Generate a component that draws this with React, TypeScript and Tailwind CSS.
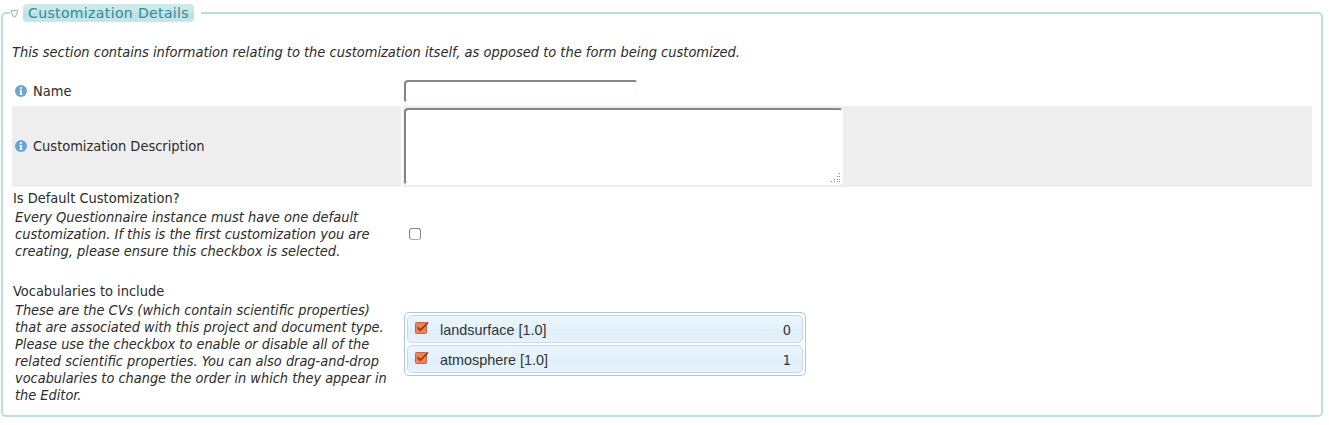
import React from "react";

function InfoIcon() {
  return (
    <svg width="12" height="12" viewBox="0 0 12 12" className="shrink-0">
      <circle cx="6" cy="6" r="6" fill="#6aa5d6" />
      <path d="M5 2.2h2v1.8H5zM4.6 5H7v3.7h.6v1H4.4v-1H5V6h-.4z" fill="#fff" />
    </svg>
  );
}

function CheckedIcon() {
  return (
    <svg width="14" height="13" viewBox="0 0 14 13" className="shrink-0">
      <rect x="0.5" y="1.5" width="11" height="11" rx="1" fill="#f58057" stroke="#c9623f" />
      <path d="M2.6 6.3L5.4 9.3L13 1.4" fill="none" stroke="#7a4030" strokeWidth="1.7" />
    </svg>
  );
}

function Vocabulary({ name, order }: { name: string; order: number }) {
  return (
    <li className="flex h-7 items-center rounded-[5px] border border-[#c5dbec] bg-[linear-gradient(to_bottom,#e9f4fc_0%,#e6f3fc_50%,#dbeefa_50%,#e6f3fc_100%)] pr-[11px] pl-[7px] text-[#333]">
      <span className="-mt-[3px] flex">
        <CheckedIcon />
      </span>
      <span className="ml-[11px] pt-0.5 font-['Liberation_Sans',sans-serif] text-[14.4px] leading-4">{name}</span>
      <span className="ml-auto pt-[2px] text-[14.4px]">{order}</span>
    </li>
  );
}

export default function App() {
  return (
    <div className="h-[425px] bg-white pt-1 pl-px">
      <fieldset className="h-[413px] w-[1322px] rounded-[5px] border-2 border-[#b8e0e3] pl-[9px]">
        <legend className="-ml-[2px] flex h-[18px] items-center pr-[7px]">
          <svg width="9" height="8" viewBox="0 0 9 8" className="mt-[2px] mr-[4px]">
            <path d="M0.8 0.7H8L5.4 6.7H3.4Z" fill="#fff" stroke="#aaa" strokeWidth="1" />
          </svg>
          <span className="flex h-[18px] w-[171px] items-center rounded-[4px] bg-[linear-gradient(to_bottom,#cfebec_0%,#c5e6e9_50%,#b7dfe3_51%,#c8e8ea_100%)] px-[5px] font-['DejaVu_Sans',sans-serif] text-[14px] tracking-[0.37px] whitespace-nowrap text-[#338c96]">
            Customization Details
          </span>
        </legend>
        <div className="font-['DejaVu_Sans_Condensed','DejaVu_Sans',sans-serif] text-[14.48px] leading-[17px] [font-stretch:condensed] whitespace-nowrap text-[#2b2b2b]">
          <p className="mt-[22px] italic">
            This section contains information relating to the customization itself, as opposed to the form being customized.
          </p>
          <div className="mt-[17px] grid w-[1300px] grid-cols-[389px_909px] grid-rows-[26px_81px_91px_122px] gap-x-[2px] gap-y-[2px]">
            <div className="flex items-center gap-[6px] pl-[3px]">
              <InfoIcon />
              <label htmlFor="name">Name</label>
            </div>
            <div className="pt-[2px] pl-px">
              <input
                id="name"
                className="block h-[23px] w-[234px] rounded-[4px] border-2 border-t-[#868686] border-r-[#fdfdfd] border-b-[#fdfdfd] border-l-[#868686] bg-white outline-none"
              />
            </div>

            <div className="flex items-center gap-[6px] bg-[#eee] pb-px pl-[3px]">
              <InfoIcon />
              <label htmlFor="description">Customization Description</label>
            </div>
            <div className="bg-[#eee] pt-[2px] pl-px">
              <div className="relative w-[439px]">
                <textarea
                  id="description"
                  className="block h-[77px] w-[439px] resize-none rounded-[4px] border-2 border-t-[#868686] border-r-[#fdfdfd] border-b-[#fdfdfd] border-l-[#868686] bg-white outline-none"
                />
                <svg width="10" height="10" viewBox="0 0 10 10" className="absolute right-[2px] bottom-[2px]" fill="#888" shapeRendering="crispEdges">
                  <path d="M8 0h1v1H8zM8 3h1v1H8zM6 3h1v1H6zM8 6h1v1H8zM6 6h1v1H6zM3 6h1v1H3zM8 8h1v1H8zM6 8h1v1H6zM3 8h1v1H3zM0 8h1v1H0z" />
                </svg>
              </div>
            </div>

            <div className="pt-[1px] pl-px">
              <label htmlFor="default">Is Default Customization?</label>
              <p className="mt-[2px] pl-[2px] italic">
                Every Questionnaire instance must have one default
                <br />
                customization. If this is the first customization you are
                <br />
                creating, please ensure this checkbox is selected.
              </p>
            </div>
            <div className="flex items-center pb-[2px] pl-[6px]">
              <input
                id="default"
                type="checkbox"
                className="size-3 appearance-none rounded-[3px] border border-[#858585] border-b-[#aaa] bg-white"
              />
            </div>

            <div className="pt-[1px] pl-px">
              <div>Vocabularies to include</div>
              <p className="mt-[2px] pl-[2px] text-[14.4px] italic">
                These are the CVs (which contain scientific properties)
                <br />
                that are associated with this project and document type.
                <br />
                Please use the checkbox to enable or disable all of the
                <br />
                related scientific properties. You can also drag-and-drop
                <br />
                vocabularies to change the order in which they appear in
                <br />
                the Editor.
              </p>
            </div>
            <div className="flex items-center pt-[2px] pl-px">
              <ul className="flex h-[64px] w-[402px] flex-col gap-[2px] rounded-[5px] border border-[#a6c9e2] bg-white p-[2px]">
                <Vocabulary name="landsurface [1.0]" order={0} />
                <Vocabulary name="atmosphere [1.0]" order={1} />
              </ul>
            </div>
          </div>
        </div>
      </fieldset>
    </div>
  );
}
